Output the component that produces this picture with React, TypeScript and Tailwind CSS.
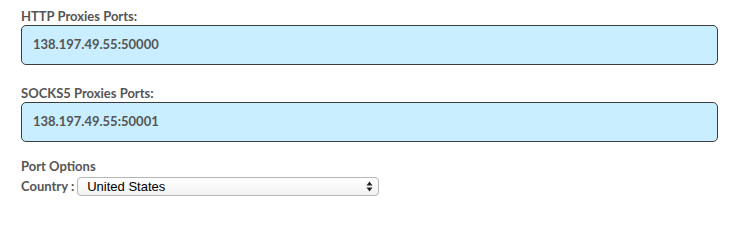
import React from 'react';

const PortBox: React.FC<{ label: string; value: string }> = ({ label, value }) => (
  <div>
    <div className="text-[13px] font-bold leading-[16px] text-[#555] mb-[1px]">{label}</div>
    <div className="h-[40px] rounded-[5px] border border-[#3d3d3d] bg-[#c9eeff] flex items-center pl-[11px] text-[13px] font-bold text-[#555]">
      {value}
    </div>
  </div>
);

export default function App() {
  return (
    <div className="w-[730px] h-[209px] bg-white pl-[21px] pr-[12px] pt-[8px] font-['Lato',sans-serif]">
      <div className="flex flex-col gap-[20px]">
        <PortBox label="HTTP Proxies Ports:" value="138.197.49.55:50000" />
        <PortBox label="SOCKS5 Proxies Ports:" value="138.197.49.55:50001" />
      </div>
      <div className="mt-[16px] text-[13px] font-bold leading-[16px] text-[#555]">Port Options</div>
      <div className="mt-[3px] flex items-center">
        <span className="text-[13px] font-bold text-[#555] mr-[3px]">Country :</span>
        <div className="w-[302px] h-[19px] rounded-[4px] border border-[#b5b5b5] bg-gradient-to-b from-white to-[#f2f2f2] flex items-center justify-between pl-[9px] pr-[5px] font-['Liberation_Sans',sans-serif] text-[13px] text-black">
          <span>United States</span>
          <svg width="7" height="11" viewBox="0 0 7 11">
            <path d="M3.5 0.5 L6.5 4.5 L0.5 4.5 Z" fill="#222" />
            <path d="M3.5 10.5 L6.5 6.5 L0.5 6.5 Z" fill="#222" />
          </svg>
        </div>
      </div>
    </div>
  );
}
